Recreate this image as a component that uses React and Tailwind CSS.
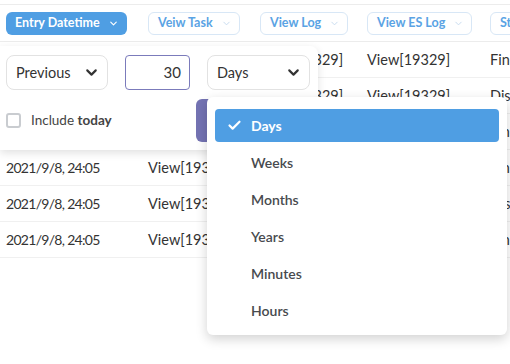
import { Check, ChevronDown } from 'lucide-react';

const cols = ['w-[142px]', 'w-[112px]', 'w-[107px]', 'w-[123px]', 'w-[80px]'];

const headers = [
  { label: 'Entry Datetime', active: true },
  { label: 'Veiw Task' },
  { label: 'View Log' },
  { label: 'View ES Log' },
  { label: 'Status' },
];

const rows = [
  ['2021/9/8, 24:05', 'View[19329]', 'View[19329]', 'View[19329]', 'Finished'],
  ['2021/9/8, 24:05', 'View[19329]', 'View[19329]', 'View[19329]', 'Dispatched'],
  ['2021/9/8, 24:05', 'View[19329]', 'View[19329]', 'View[19329]', 'Finished'],
  ['2021/9/8, 24:05', 'View[19329]', 'View[19329]', 'View[19329]', 'Finished'],
  ['2021/9/8, 24:05', 'View[19329]', 'View[19329]', 'View[19329]', 'Dispatched'],
  ['2021/9/8, 24:05', 'View[19329]', 'View[19329]', 'View[19329]', 'Finished'],
];

const units = ['Days', 'Weeks', 'Months', 'Years', 'Minutes', 'Hours'];

function HeaderButton({ label, active }) {
  if (active) {
    return (
      <button className="flex h-[23px] items-center gap-[8px] whitespace-nowrap rounded-md bg-[#4f9ee3] pl-[9px] pr-[8px] text-[12.5px] font-bold text-white">
        <span>{label}</span>
        <ChevronDown size={11} strokeWidth={2.5} />
      </button>
    );
  }
  return (
    <button className="flex h-[23px] items-center gap-[8px] whitespace-nowrap rounded-md border border-[#d8e7f6] bg-white pl-[9px] pr-[7px] text-[12.5px] font-bold text-[#5aa3e4]">
      <span>{label}</span>
      <ChevronDown size={11} strokeWidth={2} className="text-[#c4d9ee]" />
    </button>
  );
}

function Select({ value, width }) {
  return (
    <div className={`flex h-[35px] ${width} items-center justify-between rounded-lg border border-[#e2e2e2] bg-white pl-[9px] pr-[7px] text-[14.5px] text-[#333]`}>
      <span>{value}</span>
      <ChevronDown size={17} strokeWidth={3} className="text-[#333]" />
    </div>
  );
}

export default function App() {
  return (
    <div className="relative h-[364px] w-[510px] overflow-hidden bg-white font-['Lato',sans-serif] text-[#333]">
      <div className="mt-1 border-y border-[#ececec]">
        <div className="flex h-[36px] items-center">
          {headers.map((h, i) => (
            <div key={h.label} className={`${cols[i]} shrink-0 pl-[6px]`}>
              <HeaderButton label={h.label} active={h.active} />
            </div>
          ))}
        </div>
      </div>

      {rows.map((r, ri) => (
        <div key={ri} className="flex h-[36px] items-center border-b border-[#f0f0f0] text-[14.5px]">
          {r.map((c, ci) => (
            <div
              key={ci}
              className={`${cols[ci]} shrink-0 whitespace-nowrap pl-[6px] ${ci === 0 ? 'text-[14px] tracking-[-0.7px]' : ''}`}
            >
              {c}
            </div>
          ))}
        </div>
      ))}

      {/* date range popover */}
      <div className="absolute left-0 top-[46px] flex h-[104px] w-[318px] flex-col gap-[9px] rounded-r-lg bg-white pl-[6px] pt-[9px] shadow-[0_3px_8px_rgba(0,0,0,0.12)]">
        <div className="flex items-center gap-[17px]">
          <Select value="Previous" width="w-[102px]" />
          <div className="flex h-[35px] w-[65px] items-center justify-end rounded-[4px] border border-[#7b7bbb] pr-[8px] text-[15px]">
            30
          </div>
          <Select value="Days" width="w-[103px]" />
        </div>
        <div className="flex items-center">
          <div className="flex w-[190px] items-center gap-[10px]">
            <div className="h-[15px] w-[15px] rounded-[3px] border-2 border-[#c9ccd0]" />
            <span className="text-[13.5px] text-[#444]">
              Include <span className="font-bold">today</span>
            </span>
          </div>
          <button className="h-[43px] w-[113px] rounded-md bg-[#7473b3] text-[14px] font-bold text-white">
            Apply
          </button>
        </div>
      </div>

      {/* unit dropdown menu */}
      <div className="absolute left-[207px] top-[97px] flex w-[300px] flex-col gap-[4px] rounded-md bg-white px-[8px] pb-[8px] pt-[12px] shadow-[0_4px_12px_rgba(0,0,0,0.18)]">
        {units.map((u, i) =>
          i === 0 ? (
            <div key={u} className="flex h-[33px] items-center rounded-[4px] bg-[#4f9ee3] pl-[12px] text-[14px] font-bold text-white">
              <Check size={15} strokeWidth={3.5} />
              <span className="ml-[9px]">{u}</span>
            </div>
          ) : (
            <div key={u} className="flex h-[33px] items-center pl-[36px] text-[14px] font-semibold text-[#474a4e]">
              {u}
            </div>
          )
        )}
      </div>
    </div>
  );
}
